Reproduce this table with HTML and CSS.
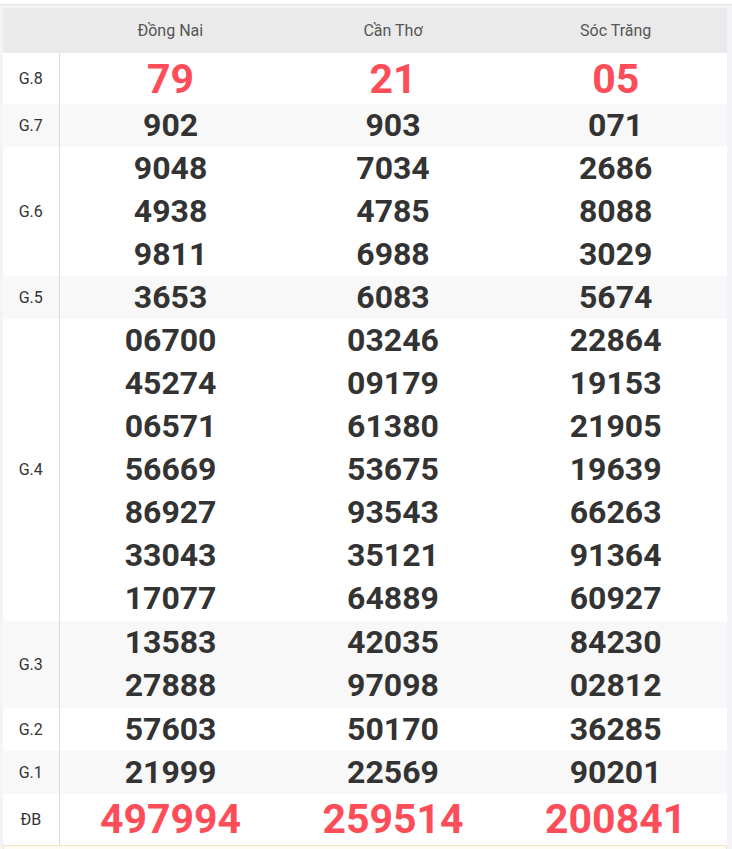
FILE: index.html
```html
<!DOCTYPE html>
<html lang="vi">
<head>
<meta charset="utf-8">
<title>Kết quả xổ số</title>
<link rel="stylesheet" href="styles.css">
</head>
<body>
<div class="topline"></div>
<div class="frame">
  <table class="kq">
    <thead>
      <tr>
        <th class="lbl"></th>
        <th>Đồng Nai</th>
        <th>Cần Thơ</th>
        <th>Sóc Trăng</th>
      </tr>
    </thead>
    <tbody>
      <tr class="g8">
        <td class="lbl">G.8</td>
        <td class="red">79</td><td class="red">21</td><td class="red">05</td>
      </tr>
      <tr class="alt">
        <td class="lbl">G.7</td>
        <td>902</td><td>903</td><td>071</td>
      </tr>
      <tr>
        <td class="lbl">G.6</td>
        <td><div>9048</div><div>4938</div><div>9811</div></td>
        <td><div>7034</div><div>4785</div><div>6988</div></td>
        <td><div>2686</div><div>8088</div><div>3029</div></td>
      </tr>
      <tr class="alt">
        <td class="lbl">G.5</td>
        <td>3653</td><td>6083</td><td>5674</td>
      </tr>
      <tr class="multi">
        <td class="lbl">G.4</td>
        <td><div>06700</div><div>45274</div><div>06571</div><div>56669</div><div>86927</div><div>33043</div><div>17077</div></td>
        <td><div>03246</div><div>09179</div><div>61380</div><div>53675</div><div>93543</div><div>35121</div><div>64889</div></td>
        <td><div>22864</div><div>19153</div><div>21905</div><div>19639</div><div>66263</div><div>91364</div><div>60927</div></td>
      </tr>
      <tr class="alt multi">
        <td class="lbl">G.3</td>
        <td><div>13583</div><div>27888</div></td>
        <td><div>42035</div><div>97098</div></td>
        <td><div>84230</div><div>02812</div></td>
      </tr>
      <tr>
        <td class="lbl">G.2</td>
        <td>57603</td><td>50170</td><td>36285</td>
      </tr>
      <tr class="alt">
        <td class="lbl">G.1</td>
        <td>21999</td><td>22569</td><td>90201</td>
      </tr>
      <tr class="db">
        <td class="lbl">ĐB</td>
        <td class="red">497994</td><td class="red">259514</td><td class="red">200841</td>
      </tr>
    </tbody>
  </table>
  <div class="note"></div>
</div>
</body>
</html>
```
FILE: styles.css
```css
html, body {
  margin: 0;
  padding: 0;
  background: #ffffff;
}
body {
  font-family: Roboto, "Liberation Sans", Arial, sans-serif;
  color: #333;
}
.topline {
  height: 1px;
  margin-top: 4px;
  background: #e4e4e6;
}
.frame {
  background: #f4f4f8;
  padding: 3px 5px 0 3px;
  min-height: 900px;
}
.kq {
  width: 100%;
  border-collapse: collapse;
  table-layout: fixed;
  background: #fff;
}
.kq th {
  background: #ebeaea;
  height: 45px;
  padding: 0;
  font-weight: 400;
  font-size: 16px;
  color: #555;
  text-align: center;
}
.kq th.lbl {
  width: 56px;
}
.kq td {
  padding: 0;
  text-align: center;
  vertical-align: middle;
  font-size: 32px;
  font-weight: 700;
  line-height: 43px;
  color: #333;
}
.kq tr.multi td {
  padding-bottom: 1px;
}
.kq td.lbl {
  width: 56px;
  font-size: 16px;
  font-weight: 400;
  color: #333;
  border-right: 1px solid #dddddd;
}
.kq tr.alt td {
  background: #f8f8f8;
}
.kq tr.g8 td {
  height: 51px;
}
.kq tr.db td {
  height: 51px;
}
.kq td.red {
  color: #fc4d59;
  font-size: 41px;
  line-height: 50px;
}
.kq tr.db td.red {
  line-height: 51px;
}
.note {
  height: 20px;
  background: #fffcf3;
  border: 1px solid #f5e4c3;
}
```
